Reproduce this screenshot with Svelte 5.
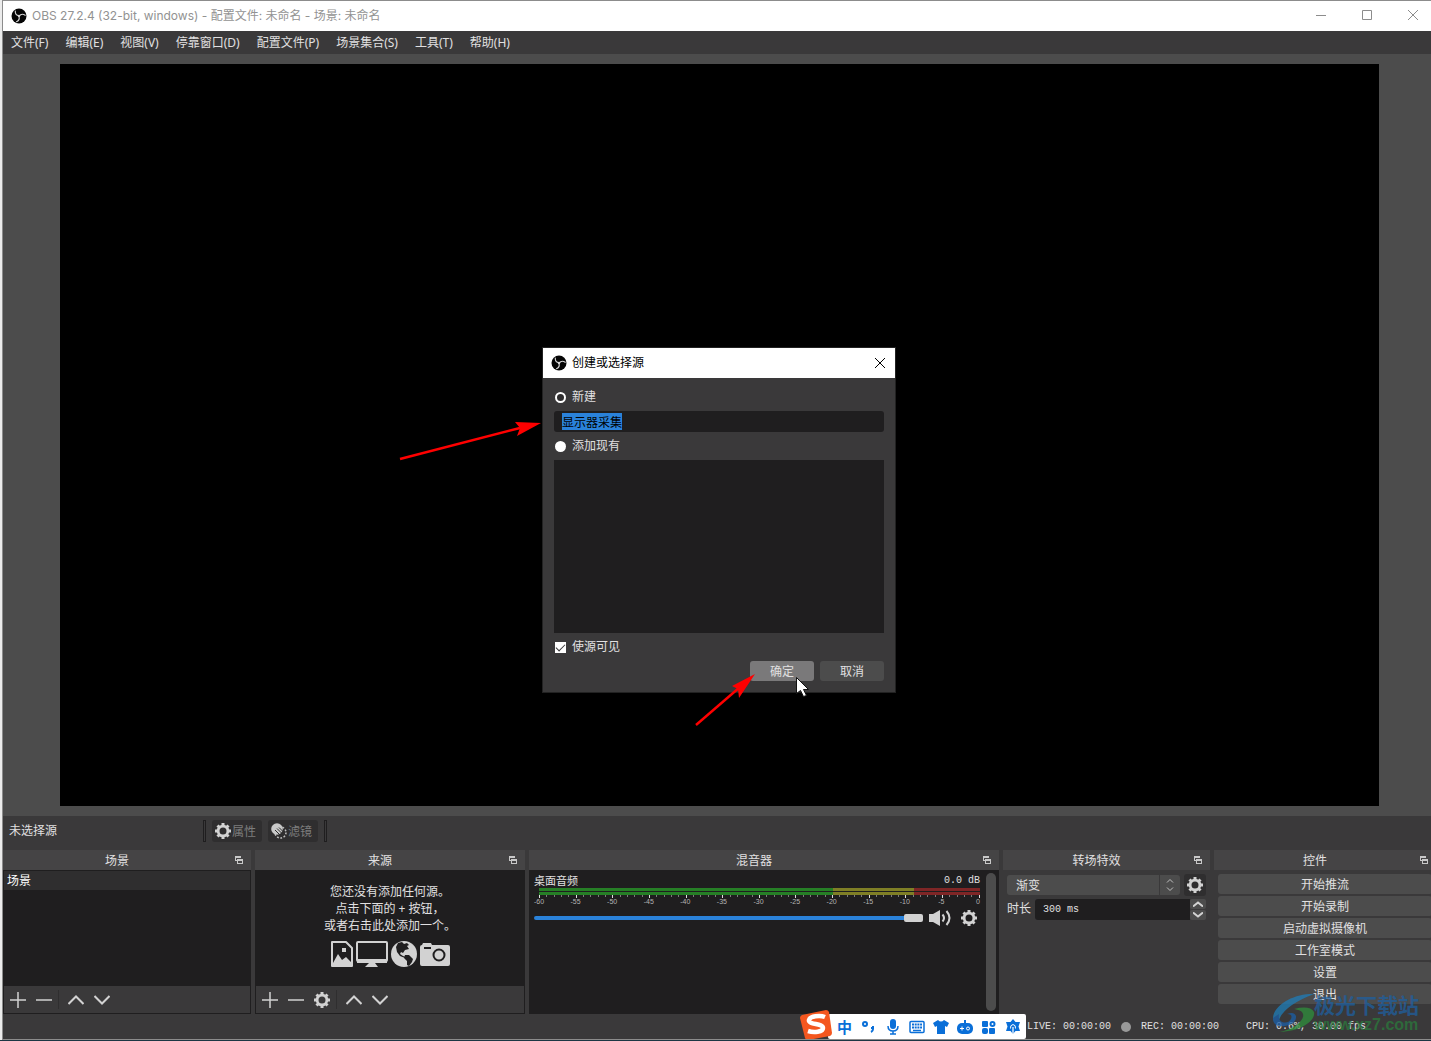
<script lang="ts">
  import { onMount } from 'svelte';

  const menus = ['文件(F)', '编辑(E)', '视图(V)', '停靠窗口(D)', '配置文件(P)', '场景集合(S)', '工具(T)', '帮助(H)'];
  const controls = ['开始推流', '开始录制', '启动虚拟摄像机', '工作室模式', '设置', '退出'];
  const ticks = Array.from({ length: 61 }, (_, i) => i - 60);
  const labels = ticks.filter((t) => t % 5 === 0);

  let sourceName = '显示器采集';
  let mode = 'new';
  let visible = true;
  let volume = 100;
  let nameInput: HTMLInputElement;

  onMount(() => {
    nameInput.focus();
    nameInput.select();
  });
</script>

{#snippet logo()}
  <svg class="logo" viewBox="0 0 16 16" width="16" height="16" aria-hidden="true">
    <circle cx="8" cy="8" r="7.5" fill="#050505" />
    <g fill="none" stroke="#d8d8d8" stroke-width="1.1" stroke-linecap="round">
      <path d="M4.3 3c-.2 2.6 1.2 4.5 3.7 4.8" />
      <path d="M4.3 3c-.2 2.6 1.2 4.5 3.7 4.8" transform="rotate(120 8 8)" />
      <path d="M4.3 3c-.2 2.6 1.2 4.5 3.7 4.8" transform="rotate(240 8 8)" />
    </g>
    <circle cx="8" cy="8" r="1.2" fill="#d8d8d8" />
  </svg>
{/snippet}

{#snippet gear()}
  <svg viewBox="0 0 16 16" width="16" height="16" fill="none" stroke="#d2d2d2" aria-hidden="true">
    <circle cx="8" cy="8" r="4.9" stroke-width="2.8" />
    <path
      d="M8 0v3M8 13v3M0 8h3M13 8h3M2.5 2.5l2 2M11.5 11.5l2 2M2.5 13.5l2-2M11.5 4.5l2-2"
      stroke-width="3"
    />
  </svg>
{/snippet}

{#snippet plus()}
  <svg viewBox="0 0 16 16" width="16" height="16" stroke="#d2d2d2" stroke-width="1.5"><path d="M8 0v16M0 8h16" /></svg>
{/snippet}

{#snippet minus()}
  <svg viewBox="0 0 16 16" width="16" height="16" stroke="#d2d2d2" stroke-width="1.5"><path d="M0 8h16" /></svg>
{/snippet}

{#snippet up()}
  <svg viewBox="0 0 16 16" width="16" height="16" fill="none" stroke="#d2d2d2" stroke-width="2"><path d="M.5 12L8 4.5 15.5 12" /></svg>
{/snippet}

{#snippet down()}
  <svg viewBox="0 0 16 16" width="16" height="16" fill="none" stroke="#d2d2d2" stroke-width="2"><path d="M.5 4L8 11.5 15.5 4" /></svg>
{/snippet}

{#snippet dockTitle(name: string)}
  <header class="dock-title">
    <h2>{name}</h2>
    <button aria-label="浮动">
      <svg viewBox="0 0 8 8" width="8" height="8" aria-hidden="true">
        <path d="M0 0h6v2H0zM0 2h1v3H0zM0 4h2v1H0z" fill="#c8c8c8" />
        <path d="M2 3h6v2H2zM2 5h1v3H2zM7 5h1v3H7zM2 7h6v1H2z" fill="#c8c8c8" />
      </svg>
    </button>
  </header>
{/snippet}

<div class="window">
  <header class="titlebar">
    {@render logo()}
    <h1>OBS 27.2.4 (32-bit, windows) - 配置文件: 未命名 - 场景: 未命名</h1>
    <div class="window-buttons">
      <button aria-label="最小化">
        <svg viewBox="0 0 10 10" width="10" height="10" stroke="#8c8c8c"><path d="M0 5.5h10" /></svg>
      </button>
      <button aria-label="最大化">
        <svg viewBox="0 0 10 10" width="10" height="10" stroke="#8c8c8c" fill="none"><path d="M.5.5h9v9h-9z" /></svg>
      </button>
      <button aria-label="关闭">
        <svg viewBox="0 0 10 10" width="10" height="10" stroke="#8c8c8c"><path d="M0 0l10 10M10 0L0 10" /></svg>
      </button>
    </div>
  </header>

  <nav class="menubar">
    {#each menus as menu}
      <button>{menu}</button>
    {/each}
  </nav>

  <main class="preview">
    <div class="canvas"></div>
  </main>

  <div class="context-bar">
    <span class="context-label">未选择源</span>
    <i class="handle"></i>
    <button disabled>{@render gear()}属性</button>
    <button disabled>
      <svg viewBox="0 0 16 16" width="16" height="16" fill="none" aria-hidden="true">
        <circle cx="9.5" cy="9.5" r="5.5" stroke="#c0c0c0" stroke-width="1.5" stroke-dasharray="1.8 1.6" />
        <circle cx="6" cy="6" r="5.8" fill="#c8c8c8" />
        <path d="M4 7l5 5M6 5.5l5 5M8 4.5l4 4" stroke="#2d2d2d" stroke-width="1" />
      </svg>滤镜
    </button>
    <i class="handle"></i>
  </div>

  <div class="docks">
    <section class="dock">
      {@render dockTitle('场景')}
      <div class="list">
        <div class="list-item">场景</div>
      </div>
      <div class="tools">
        <button aria-label="添加">{@render plus()}</button>
        <button aria-label="移除">{@render minus()}</button>
        <i class="divider"></i>
        <button aria-label="上移">{@render up()}</button>
        <button aria-label="下移">{@render down()}</button>
      </div>
    </section>

    <section class="dock">
      {@render dockTitle('来源')}
      <div class="list empty">
        <p>您还没有添加任何源。<br />点击下面的 + 按钮，<br />或者右击此处添加一个。</p>
        <div class="source-icons">
          <svg viewBox="0 0 22 26" width="22" height="26" aria-hidden="true">
            <path d="M1 1h14l6 6v18H1z" fill="none" stroke="#d2d2d2" stroke-width="2" stroke-linejoin="round" />
            <path d="M2 22l5-9 4 6 4-3 5 5v3H2z" fill="#d2d2d2" />
            <path d="M11 7h4v4h-4z" fill="#d2d2d2" />
          </svg>
          <svg viewBox="0 0 32 26" width="32" height="26" aria-hidden="true">
            <rect x="1" y="1" width="30" height="19" rx="1" fill="none" stroke="#d2d2d2" stroke-width="2" />
            <path d="M1 18h30v4H1zM13 22h6l3 4H9z" fill="#d2d2d2" />
          </svg>
          <svg viewBox="0 0 26 26" width="26" height="26" aria-hidden="true">
            <circle cx="13" cy="13" r="13" fill="#d2d2d2" />
            <path d="M7 2l4-1 2 2 3-1 2 2-2 1 2 3-4 1-2 3-2-1-1 2 3 2 3 1-1 1-5-2-3-4-1-5z" fill="#1f1e1f" />
            <path d="M14 14l4 0 4 4-1 3-3 4-2-1v-4l-3-3z" fill="#1f1e1f" />
          </svg>
          <svg viewBox="0 0 30 26" width="30" height="26" aria-hidden="true">
            <path d="M2 4l1-2h8l1 2h16q2 0 2 2v17q0 2-2 2H2q-2 0-2-2V6q0-2 2-2z" fill="#d2d2d2" />
            <path d="M4 6h7v2H4z" fill="#1f1e1f" />
            <circle cx="19" cy="14" r="5.5" fill="none" stroke="#1f1e1f" stroke-width="2" />
          </svg>
        </div>
      </div>
      <div class="tools">
        <button aria-label="添加">{@render plus()}</button>
        <button aria-label="移除">{@render minus()}</button>
        <button aria-label="属性">{@render gear()}</button>
        <i class="divider"></i>
        <button aria-label="上移">{@render up()}</button>
        <button aria-label="下移">{@render down()}</button>
      </div>
    </section>

    <section class="dock">
      {@render dockTitle('混音器')}
      <div class="mixer">
        <div class="channel">
          <div class="channel-head">
            <label for="volume">桌面音频</label>
            <span class="mono">0.0 dB</span>
          </div>
          <div class="meter">
            <div class="bar"></div>
            <div class="bar"></div>
            <div class="ticks">
              {#each ticks as t}
                <i class:major={t % 5 === 0}></i>
              {/each}
            </div>
            <div class="scale">
              {#each labels as t}
                <span>{t}</span>
              {/each}
            </div>
          </div>
          <div class="channel-foot">
            <input id="volume" type="range" min="0" max="100" bind:value={volume} />
            <button aria-label="静音">
              <svg viewBox="0 0 22 16" width="22" height="16" aria-hidden="true">
                <path d="M0 4h4l7-4v16l-7-4H0z" fill="#d2d2d2" />
                <path d="M13.5 4.5q3 3.5 0 7M17.5 1q6 7 0 14" fill="none" stroke="#d2d2d2" stroke-width="2" />
              </svg>
            </button>
            <button aria-label="音频设置">{@render gear()}</button>
          </div>
        </div>
        <div class="scrollbar"></div>
      </div>
    </section>

    <section class="dock">
      {@render dockTitle('转场特效')}
      <div class="transitions">
        <div class="row">
          <div class="select">
            <select aria-label="转场特效">
              <option>渐变</option>
            </select>
            <svg viewBox="0 0 8 12" width="8" height="12" fill="none" stroke="#c0c0c0" aria-hidden="true">
              <path d="M1 3.5l3-3 3 3M1 8.5l3 3 3-3" />
            </svg>
          </div>
          <button class="square" aria-label="转场属性">{@render gear()}</button>
        </div>
        <div class="row duration">
          <label for="duration">时长</label>
          <input id="duration" class="mono" type="text" value="300 ms" />
          <div class="spin">
            <button aria-label="增加">
              <svg viewBox="0 0 10 6" width="10" height="6" fill="none" stroke="#d2d2d2" stroke-width="2"><path d="M0 5.5l5-4 5 4" /></svg>
            </button>
            <button aria-label="减少">
              <svg viewBox="0 0 10 6" width="10" height="6" fill="none" stroke="#d2d2d2" stroke-width="2"><path d="M0 .5l5 4 5-4" /></svg>
            </button>
          </div>
        </div>
      </div>
    </section>

    <section class="dock">
      {@render dockTitle('控件')}
      <div class="controls">
        {#each controls as name}
          <button>{name}</button>
        {/each}
      </div>
    </section>
  </div>

  <footer class="status mono">
    <span>LIVE: 00:00:00</span>
    <i class="dot"></i>
    <span>REC: 00:00:00</span>
    <span class="cpu">CPU: 0.6%, 30.00 fps</span>
  </footer>

  <form class="dialog" on:submit|preventDefault>
    <header>
      {@render logo()}
      <h2>创建或选择源</h2>
      <button type="button" aria-label="关闭">
        <svg viewBox="0 0 10 10" width="10" height="10" stroke="#000"><path d="M0 0l10 10M10 0L0 10" /></svg>
      </button>
    </header>
    <div class="dialog-body">
      <label class="option"><input type="radio" value="new" bind:group={mode} />新建</label>
      <input class="name" type="text" aria-label="名称" bind:this={nameInput} bind:value={sourceName} />
      <label class="option"><input type="radio" value="existing" bind:group={mode} />添加现有</label>
      <div class="existing"></div>
      <label class="option"><input type="checkbox" bind:checked={visible} />使源可见</label>
      <div class="actions">
        <button class="primary">确定</button>
        <button type="button">取消</button>
      </div>
    </div>
    <svg class="pointers" viewBox="0 0 420 390" width="420" height="390" aria-hidden="true">
      <g stroke="#f00" fill="#f00">
        <path d="M10 111L130 80" stroke-width="2.4" />
        <path d="M151 75l-26-1 5 6-3 8z" stroke="none" />
        <path d="M306 377L350 339" stroke-width="2.4" />
        <path d="M365 326l-23 12 6 3 1 9z" stroke="none" />
      </g>
      <path d="M406.5 329.5v16l4-3 3 6 3-1-3-6h5z" fill="#fff" stroke="#111" />
    </svg>
  </form>

  <div class="ime">
    <svg class="ime-logo" viewBox="0 0 32 30" width="32" height="30" aria-hidden="true">
      <path d="M2 5L26 0q2 0 3 2l3 21q0 2-2 3L8 30q-2 0-3-2L0 8q0-2 2-3z" fill="#f4571f" />
      <path d="M25 7c-5-2-15-1-16 3-1 5 14 3 14 8 0 4-9 5-15 3" fill="none" stroke="#fff" stroke-width="4.5" />
    </svg>
    <span>中</span>
    <svg viewBox="0 0 16 16" width="16" height="16" fill="none" stroke="#0a6fd8" stroke-width="2" aria-hidden="true">
      <circle cx="4" cy="5" r="2" /><path d="M11 8v2M12 7v3q0 2-2 3" />
    </svg>
    <svg viewBox="0 0 16 16" width="16" height="16" fill="none" stroke="#0a6fd8" stroke-width="2" aria-hidden="true">
      <rect x="5" y="0" width="6" height="10" rx="3" fill="#0a6fd8" stroke="none" />
      <path d="M3 7q0 5 5 5t5-5M8 12v3M5 15h6" stroke-width="1.5" />
    </svg>
    <svg viewBox="0 0 16 16" width="16" height="16" fill="none" stroke="#0a6fd8" stroke-width="2" aria-hidden="true">
      <rect x="1" y="2.5" width="14" height="11" rx="1" stroke-width="1.5" />
      <path d="M3 5.5h10M3 8.5h10" stroke-dasharray="2 .7" /><path d="M4 11.5h8" stroke-width="1.5" />
    </svg>
    <svg viewBox="0 0 16 16" width="16" height="16" fill="#0a6fd8" aria-hidden="true">
      <path d="M5 1q3 3 6 0l5 3-2 4-2-1v8H4V7L2 8 0 4z" />
    </svg>
    <svg viewBox="0 0 16 16" width="16" height="16" aria-hidden="true">
      <rect x="0" y="4" width="16" height="11" rx="5" fill="#0a6fd8" /><path d="M8 1v4" stroke="#0a6fd8" stroke-width="2" />
      <path d="M3 9.5h4M5 7.5v4" stroke="#fff" /><circle cx="11" cy="9.5" r="1.5" fill="none" stroke="#fff" />
    </svg>
    <svg viewBox="0 0 16 16" width="16" height="16" fill="#0a6fd8" aria-hidden="true">
      <rect x="1" y="2" width="6" height="6" rx="1" /><rect x="1" y="9" width="6" height="6" rx="2" />
      <rect x="8" y="9" width="6" height="6" rx="1" /><circle cx="11.5" cy="5" r="2" fill="none" stroke="#0a6fd8" stroke-width="2" />
    </svg>
    <svg viewBox="0 0 16 16" width="16" height="16" fill="#0a6fd8" aria-hidden="true">
      <path d="M8 0l2.500 3H15l-1.500 4.500L15 12h-4.500L8 15l-2.500-3H1l1.500-4.500L1 3h4.500z" />
      <path d="M8 16V8" stroke="#fff" stroke-width="1.200" />
      <path d="M5.500 9.500q-.5-3.500 2.500-4 3 .5 2.500 4" stroke="#fff" fill="none" />
    </svg>
  </div>

  <div class="watermark" aria-hidden="true">
    <svg viewBox="0 0 44 40" width="44" height="40">
      <path d="M42 0C24-1 2 10 1 24q0 5 5 6 2-17 36-30z" fill="#1f7db8" />
      <path d="M1 24q0 10 12 8 12-2 11-10-2-5-9-2 6 0 4 5-3 5-9 3-4-2-3-8z" fill="#1b5fa8" />
      <path d="M22 15q16-4 20 3c2 8-12 19-34 20 14-3 25-12 23-18-1-4-5-4-9-5z" fill="#2f8f3c" />
    </svg>
    <div>
      <strong>极光下载站</strong>
      <em>www.xz7.com</em>
    </div>
  </div>
</div>

<style>
  :global(body) {
    min-height: 100vh;
    background: linear-gradient(to top, #1d3644 1px, #ececec 1px);
  }

  .window {
    position: relative;
    display: flex;
    flex-direction: column;
    box-sizing: border-box;
    min-height: calc(100vh - 1px);
    margin-left: 2px;
    border: 1px solid #8c8c8c;
    border-right: none;
    background: #3a393a;
    color: #e1e0e1;
    font-family: 'Noto Sans', 'Noto Sans CJK SC', sans-serif;
    font-size: 12px;
    line-height: 16px;
    overflow: hidden;
  }

  h1,
  h2,
  p {
    margin: 0;
    font-size: 12px;
    font-weight: normal;
  }

  button,
  input,
  select {
    margin: 0;
    padding: 0;
    border: none;
    background: none;
    color: inherit;
    font-family: 'Noto Sans CJK SC', sans-serif;
    font-size: 12px;
    line-height: 16px;
    outline: none;
  }

  svg {
    display: block;
    flex: none;
  }

  .mono {
    font-family: 'Liberation Mono', monospace;
    font-size: 10px;
  }

  .titlebar {
    display: flex;
    align-items: center;
    height: 30px;
    padding-left: 8px;
    background: #fff;
    color: #929292;
  }

  .titlebar h1 {
    flex: 1;
    margin-left: 5px;
    font-family: Inter, 'Noto Sans CJK SC', sans-serif;
  }

  .window-buttons {
    display: flex;
    align-self: flex-start;
    margin-right: -5px;
  }

  .window-buttons button {
    display: flex;
    align-items: center;
    justify-content: center;
    width: 46px;
    height: 28px;
  }

  .menubar {
    display: flex;
    gap: 17px;
    height: 23px;
    padding-left: 8px;
  }

  .menubar button {
    font-family: 'Noto Sans', 'Noto Sans CJK SC', sans-serif;
  }

  .preview {
    flex: 1;
    display: flex;
    padding: 10px 52px 10px 57px;
    background: #4c4c4c;
  }

  .canvas {
    flex: 1;
    background: #000;
  }

  .context-bar {
    display: flex;
    align-items: center;
    gap: 6px;
    height: 30px;
    padding: 0 6px 4px;
  }

  .context-label {
    width: 188px;
  }

  .context-bar button {
    display: flex;
    align-items: center;
    gap: 1px;
    height: 22px;
    padding: 0 6px 0 3px;
    border-radius: 3px;
    background: #2f2e2f;
    color: #7d7d7d;
  }

  .handle {
    width: 1px;
    height: 20px;
    border: 1px solid #1f1e1f;
  }

  .docks {
    display: grid;
    grid-template-columns:
      minmax(0, 248fr) minmax(0, 270fr) minmax(0, 470fr)
      minmax(0, 207fr) minmax(0, 222fr);
    gap: 4px;
    height: 164px;
    margin-right: -5px;
  }

  .dock {
    display: flex;
    flex-direction: column;
  }

  .dock-title {
    display: flex;
    align-items: center;
    height: 20px;
    padding-right: 8px;
    background: #454445;
  }

  .dock-title h2 {
    flex: 1;
    padding: 2px 4px 0 0;
    text-align: center;
  }

  .list {
    flex: 1;
    padding: 1px;
    background: #1f1e1f;
  }

  .list-item {
    height: 19px;
    padding-left: 3px;
    background: #2f2e2f;
    color: #fff;
    line-height: 19px;
  }

  .empty {
    padding-top: 13px;
    text-align: center;
  }

  .empty p {
    line-height: 17px;
  }

  .source-icons {
    display: flex;
    justify-content: center;
    gap: 3px;
    margin-top: 7px;
  }

  .tools {
    display: flex;
    align-items: center;
    gap: 10px;
    height: 27px;
    padding-left: 6px;
    border: 1px solid #1f1e1f;
    border-top: none;
  }

  .divider {
    width: 1px;
    height: 19px;
    margin: 0 -3px 0 -4px;
    border-left: 1px solid #2f2e2f;
    padding-right: 1px;
  }

  .mixer {
    flex: 1;
    display: flex;
    gap: 6px;
    padding: 3px 3px 3px 5px;
    background: #1f1e1f;
  }

  .channel {
    flex: 1;
    min-width: 0;
  }

  .channel-head {
    display: flex;
    justify-content: space-between;
    height: 15px;
    font-size: 11px;
    line-height: 15px;
  }

  .meter {
    margin-left: 5px;
  }

  .bar {
    height: 3px;
    margin-bottom: 1px;
    background: linear-gradient(to right, #267f26 0 66.6%, #7f7f26 66.6% 85%, #7f2626 85%);
  }

  .ticks {
    display: flex;
    justify-content: space-between;
    height: 3px;
    margin-top: -1px;
  }

  .ticks i {
    width: 1px;
    height: 2px;
    background: #7c7c7c;
  }

  .ticks .major {
    height: 3px;
    background: #e1e0e1;
  }

  .scale {
    display: flex;
    justify-content: space-between;
    height: 9px;
    padding-right: 2px;
    color: #b4b4b4;
    font-family: 'Liberation Sans', sans-serif;
    font-size: 7px;
    line-height: 8px;
  }

  .scale span {
    display: flex;
    justify-content: center;
    width: 0;
  }

  .channel-foot {
    display: flex;
    align-items: center;
    padding: 3px 3px 0 0;
  }

  .channel-foot input {
    flex: 1;
    min-width: 0;
    height: 16px;
    appearance: none;
  }

  .channel-foot input::-webkit-slider-runnable-track {
    height: 4px;
    border-radius: 2px;
    background: #2a82da;
  }

  .channel-foot input::-webkit-slider-thumb {
    appearance: none;
    width: 19px;
    height: 8px;
    margin-top: -2px;
    border-radius: 2px;
    background: #d2d2d2;
  }

  .channel-foot button {
    margin-left: 6px;
  }

  .channel-foot button:last-child {
    margin-left: 10px;
  }

  .scrollbar {
    width: 10px;
    border-radius: 5px;
    background: #4c4c4c;
  }

  .transitions {
    padding: 4px;
  }

  .row {
    display: flex;
    align-items: center;
    gap: 4px;
    height: 22px;
  }

  .select {
    position: relative;
    flex: 1;
    display: flex;
  }

  .select select {
    flex: 1;
    height: 20px;
    padding-left: 9px;
    border-radius: 3px;
    background: linear-gradient(#3a393a, #3a393a) right 20px top / 1px 100% no-repeat #4c4c4c;
    appearance: none;
  }

  .select svg {
    position: absolute;
    top: 4px;
    right: 6px;
    pointer-events: none;
  }

  .square {
    display: flex;
    align-items: center;
    justify-content: center;
    width: 22px;
    height: 22px;
    border-radius: 3px;
    background: #2f2e2f;
  }

  .duration {
    gap: 0;
    margin-top: 2px;
  }

  .duration input {
    flex: 1;
    min-width: 0;
    height: 21px;
    margin-left: 4px;
    padding-left: 8px;
    border-radius: 3px 0 0 3px;
    background: #1f1e1f;
    font-family: 'Liberation Mono', monospace;
    font-size: 10px;
  }

  .spin {
    display: grid;
    gap: 1px;
    width: 16px;
  }

  .spin button {
    display: flex;
    align-items: center;
    justify-content: center;
    height: 10px;
    border-radius: 2px;
    background: #4c4c4c;
  }

  .controls {
    display: grid;
    gap: 2px;
    padding: 4px;
  }

  .controls button {
    height: 20px;
    border-radius: 3px;
    background: #4c4c4c;
  }

  .status {
    display: flex;
    align-items: center;
    justify-content: flex-end;
    gap: 10px;
    height: 25px;
    padding-right: 65px;
  }

  .dot {
    width: 10px;
    height: 10px;
    border-radius: 50%;
    background: #999;
  }

  .cpu {
    margin-left: 17px;
  }

  .dialog {
    position: absolute;
    top: 347px;
    left: 540px;
    width: 352px;
    background: #3a393a;
    box-shadow: 0 0 0 1px #222;
  }

  .dialog header {
    display: flex;
    align-items: center;
    height: 30px;
    padding: 0 10px 0 8px;
    background: #fff;
    color: #000;
  }

  .dialog h2 {
    flex: 1;
    margin-left: 5px;
  }

  .dialog-body {
    display: flex;
    flex-direction: column;
    gap: 3px;
    padding: 8px 11px 11px;
  }

  .option {
    display: flex;
    align-items: center;
    gap: 6px;
    height: 22px;
  }

  .option input {
    width: 11px;
    height: 11px;
    margin-left: 1px;
    background: #fff;
    appearance: none;
  }

  .option input[type='radio'] {
    border-radius: 50%;
  }

  .option input[type='radio']:checked {
    box-sizing: border-box;
    border: 2px solid #fff;
    background: #2f2e2f;
  }

  .option input[type='checkbox']:checked::after {
    content: '';
    display: block;
    box-sizing: border-box;
    width: 9px;
    height: 5px;
    margin: 2px 1px;
    border-left: 1px solid #3a393a;
    border-bottom: 1px solid #3a393a;
    transform: rotate(-45deg);
  }

  .name {
    height: 21px;
    padding: 0 8px;
    border-radius: 3px;
    background: #1f1e1f;
  }

  .name::selection {
    background: #2a82da;
    color: #000;
  }

  .existing {
    height: 173px;
    background: #1f1e1f;
  }

  .actions {
    display: flex;
    justify-content: flex-end;
    gap: 6px;
  }

  .actions button {
    width: 64px;
    height: 20px;
    border-radius: 3px;
    background: #4c4c4c;
  }

  .actions .primary {
    background: #7a797a;
  }

  .pointers {
    position: absolute;
    top: 0;
    left: -153px;
    pointer-events: none;
  }

  .ime {
    position: absolute;
    bottom: 0;
    left: 825px;
    display: flex;
    align-items: center;
    gap: 8px;
    box-sizing: border-box;
    width: 198px;
    height: 25px;
    padding-left: 9px;
    border-radius: 2px;
    background: #fff;
    color: #0a6fd8;
  }

  .ime span {
    width: 16px;
    font-size: 15px;
    font-weight: bold;
  }

  .ime-logo {
    position: absolute;
    bottom: -1px;
    left: -28px;
  }

  .watermark {
    position: absolute;
    right: 12px;
    bottom: 5px;
    display: flex;
    align-items: center;
    opacity: 0.75;
    pointer-events: none;
  }

  .watermark div {
    display: grid;
    margin-left: -2px;
  }

  .watermark strong {
    color: #1f5f9f;
    font-size: 21px;
    line-height: 22px;
  }

  .watermark em {
    color: #2a7a3c;
    font-family: 'Liberation Sans', sans-serif;
    font-size: 16px;
    font-style: normal;
    font-weight: bold;
    line-height: 18px;
  }
</style>
